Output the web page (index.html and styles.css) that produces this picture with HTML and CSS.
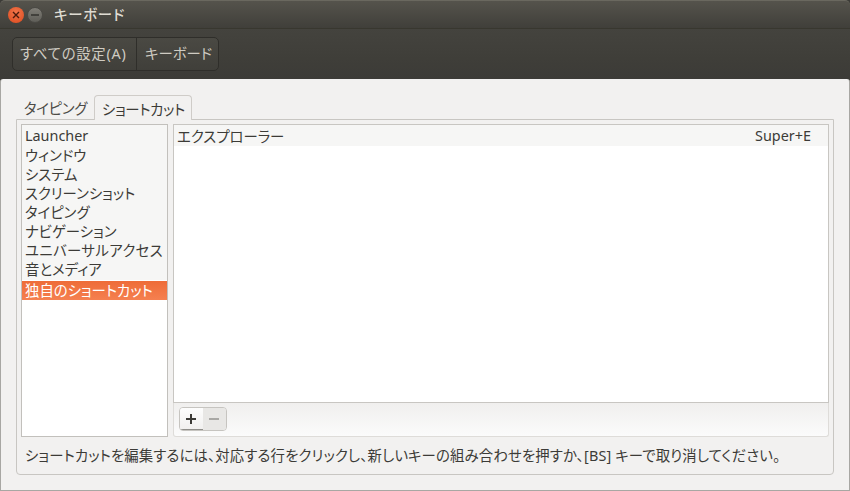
FILE: index.html
```html
<!DOCTYPE html>
<html lang="ja">
<head>
<meta charset="utf-8">
<title>キーボード</title>
<link rel="stylesheet" href="styles.css">
</head>
<body>
<div class="window">
  <header class="titlebar">
    <span class="wbtn close"><svg width="8" height="8" viewBox="0 0 8 8"><path d="M1 1l6 6M7 1L1 7" stroke="#4a1a0c" stroke-width="1.4"/></svg></span>
    <span class="wbtn mini"><svg width="8" height="8" viewBox="0 0 8 8"><path d="M0 4h8" stroke="#2f2e2a" stroke-width="1.4"/></svg></span>
    <span class="wtitle">キーボード</span>
  </header>
  <nav class="toolbar">
    <div class="crumbs">
      <span class="crumb first">すべての設定(A)</span>
      <span class="crumb">キーボード</span>
    </div>
  </nav>
  <main class="content">
    <div class="tabs">
      <span class="tab">タイピング</span>
      <span class="tab active">ショートカット</span>
    </div>
    <section class="panel">
      <div class="columns">
        <ul class="cats">
          <li class="latin">Launcher</li>
          <li>ウィンドウ</li>
          <li>システム</li>
          <li>スクリーンショット</li>
          <li>タイピング</li>
          <li>ナビゲーション</li>
          <li class="wide">ユニバーサルアクセス</li>
          <li>音とメディア</li>
          <li class="sel">独自のショートカット</li>
        </ul>
        <div class="right">
          <div class="shortcuts">
            <div class="row"><span>エクスプローラー</span><span>Super+E</span></div>
          </div>
          <div class="actions">
            <div class="pm">
              <span class="pmb plus"><svg width="12" height="12" viewBox="0 0 12 12"><path d="M1 6h10M6 1v10" stroke="#3c3b37" stroke-width="2"/></svg></span>
              <span class="pmb minus"><svg width="12" height="12" viewBox="0 0 12 12"><path d="M1 6h10" stroke="#a9a8a5" stroke-width="2"/></svg></span>
            </div>
          </div>
        </div>
      </div>
      <p class="hint">ショートカットを編集するには、対応する行をクリックし、新しいキーの組み合わせを押すか、[BS] キーで取り消してください。</p>
    </section>
  </main>
</div>
</body>
</html>
```
FILE: styles.css
```css
* { box-sizing: border-box; }
html, body { margin: 0; padding: 0; }
body {
  width: 850px;
  height: 491px;
  overflow: hidden;
  background: #3c3b37;
  font-family: "Noto Sans", "Noto Sans CJK JP", sans-serif;
  font-size: 14.4px;
  font-feature-settings: "palt";
  color: #3c3b37;
}
.window { display: flex; flex-direction: column; height: 491px; }
.titlebar {
  height: 28px;
  flex: none;
  display: flex;
  align-items: center;
  padding: 0 0 0 8px;
  background: linear-gradient(#55534c, #403f3a);
  border-top: 1px solid #6a685f;
  border-radius: 5px 5px 0 0;
}
.wbtn {
  width: 16px; height: 16px;
  border-radius: 50%;
  display: flex; align-items: center; justify-content: center;
  margin-right: 3px;
}
.close { background: radial-gradient(circle at 50% 35%, #f2754a, #dc4a1e); }
.mini { background: linear-gradient(#7f7d76, #5f5e58); border: 1px solid #4a4944; margin-right: 11px; }
.wtitle { color: #dfdbd2; font-size: 14.4px; font-weight: 500; letter-spacing: .8px; padding-bottom: 2px; }
.toolbar {
  height: 51px;
  flex: none;
  padding: 8px 12px 0;
  background: linear-gradient(#44433e, #3f3e39 60%, #3c3b37);
  border-top: 1px solid #38372f;
}
.crumbs {
  display: inline-flex;
  height: 34px;
  border: 1px solid #2f2e2a;
  border-radius: 5px;
  background: linear-gradient(#4a4943, #403f3a);
}
.crumb {
  display: flex; align-items: center;
  width: 82px;
  padding: 0 0 3px 8px;
  color: #cfcbc2;
  white-space: nowrap;
  border-left: 1px solid #2f2e2a;
}
.crumb.first {
  width: 123px;
  padding-left: 7px;
  border-left: 0;
  letter-spacing: .75px;
}
.content {
  flex: 1;
  background: #f2f1f0;
  padding: 16px 15px 15px;
  display: flex; flex-direction: column;
  border-left: 1px solid #a8a7a3;
  border-right: 1px solid #a8a7a3;
  border-bottom: 1px solid #a8a7a3;
  border-radius: 3px 3px 0 0;
}
.tabs { display: flex; height: 24px; flex: none; position: relative; z-index: 1; }
.tab {
  display: flex; align-items: center;
  padding: 0 0 0 8px;
  height: 24px;
  color: #4c4b47;
  white-space: nowrap;
  letter-spacing: -.3px;
}
.tab:first-child { width: 78px; }
.tab.active {
  width: 98px;
  height: 25px;
  padding-left: 7px;
  background: #f2f1f0;
  border: 1px solid #cfccc8;
  border-bottom: 0;
  border-radius: 4px 4px 0 0;
  color: #3c3b37;
}
.panel {
  height: 356px;
  flex: none;
  border: 1px solid #c8c6c2;
  border-radius: 0 0 4px 4px;
  padding: 4px;
  display: flex; flex-direction: column;
}
.columns { display: flex; gap: 5px; height: 313px; flex: none; }
.cats {
  list-style: none;
  margin: 0; padding: 2px 0 0;
  width: 147px;
  background: #fff;
  border: 1px solid #c2c0bc;
  position: relative;
}
.cats::before {
  content: "";
  position: absolute; left: 0; right: 0; top: 0; height: 155px;
  background: #f6f6f5;
}
.cats li {
  position: relative;
  height: 19px;
  line-height: 19px;
  padding-left: 3px;
  white-space: nowrap;
}
.cats .wide { letter-spacing: .4px; }
.cats .latin { line-height: 17px; }
.cats .sel {
  margin-top: 2px;
  height: 19px;
  background: linear-gradient(#ee6c38, #f58050);
  color: #fff;
}
.right {
  flex: 1;
  display: flex; flex-direction: column;
}
.shortcuts {
  flex: 1;
  background: #fff;
  border: 1px solid #c8c6c2;
}
.row {
  height: 21px;
  display: flex; justify-content: space-between; align-items: center;
  padding: 0 17px 0 3px;
  background: #f6f6f5;
}
.actions {
  height: 34px;
  flex: none;
  padding: 4px 5px;
  background: linear-gradient(#f0efee, #fbfbfb);
  border: 1px solid #dedcd9;
  border-top: 0;
  border-radius: 0 0 3px 3px;
}
.pm {
  display: inline-flex;
  height: 24px;
  border: 1px solid #c6c4c0;
  border-radius: 4px;
  overflow: hidden;
}
.pmb { display: flex; align-items: center; justify-content: center; }
.plus { width: 23px; padding-right: 2px; background: linear-gradient(#fdfdfd, #f1f0ef); border-bottom: 1px solid #8f8e8a; }
.minus { width: 23px; padding-right: 1px; background: #e8e7e5; }
.hint {
  margin: 9px 0 0 4px;
  line-height: 20px;
  white-space: nowrap;
  letter-spacing: .13px;
}
```
